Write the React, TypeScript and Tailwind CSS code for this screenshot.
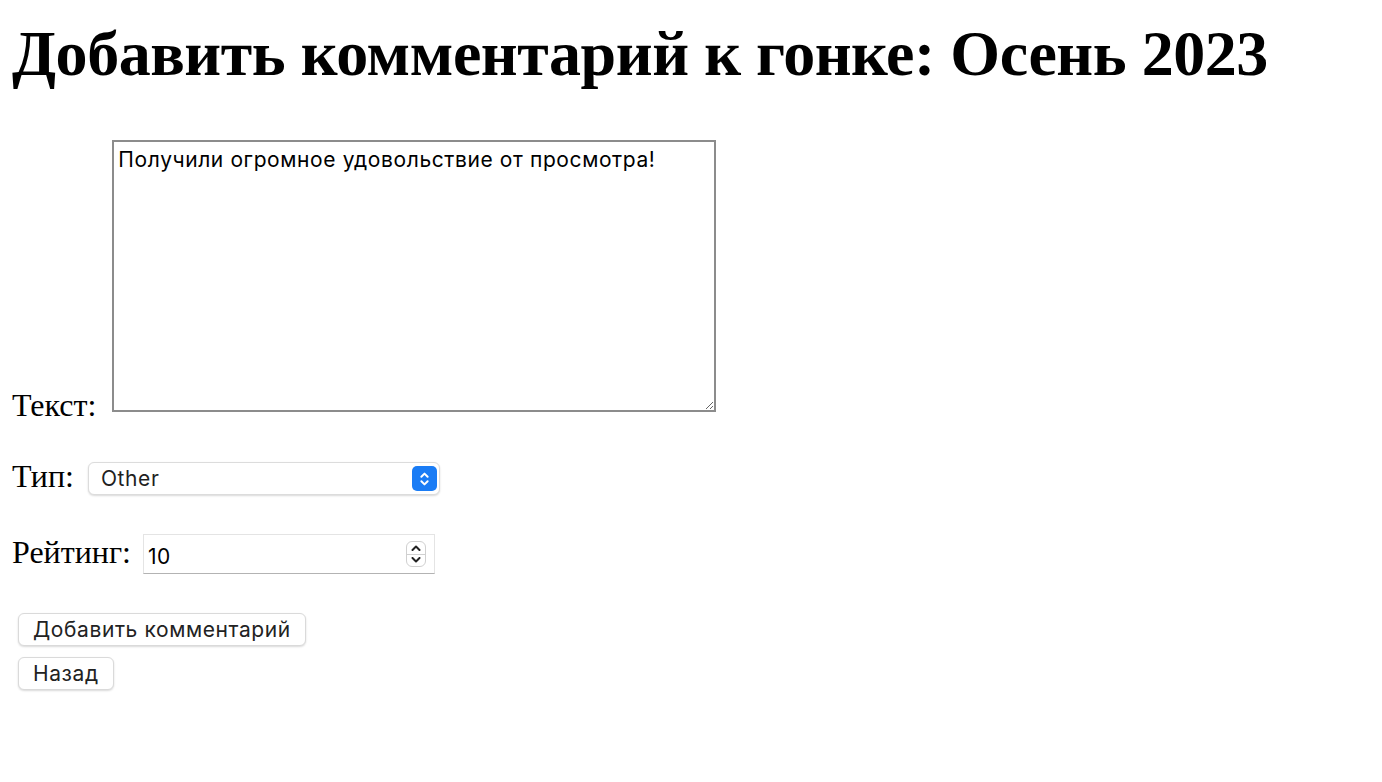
import { useState } from "react";

const serif = { fontFamily: '"Liberation Serif", "Times New Roman", serif' };

function Chevrons({ className }: { className?: string }) {
  return (
    <svg viewBox="0 0 12 20" className={className} fill="none" stroke="currentColor" strokeWidth="2.2" strokeLinecap="round" strokeLinejoin="round">
      <path d="M2.5 7.5 6 4l3.5 3.5" />
      <path d="M2.5 12.5 6 16l3.5-3.5" />
    </svg>
  );
}

export default function App() {
  const [text, setText] = useState("Получили огромное удовольствие от просмотра!");
  const [type, setType] = useState("Other");
  const [rating, setRating] = useState("10");

  return (
    <div className="min-h-screen bg-white px-[12px] text-black font-['Inter','Liberation_Sans',Arial,sans-serif]">
      <h1 className="pt-[18px] text-[64px] leading-[72px] font-bold tracking-[-0.45px]" style={serif}>
        Добавить комментарий к гонке: Осень 2023
      </h1>

      <form className="mt-[50px] flex flex-col" onSubmit={(e) => e.preventDefault()}>
        {/* Текст */}
        <div className="flex items-end">
          <label htmlFor="text" className="text-[32px] leading-[32px] mb-[-9px] mr-[16px]" style={serif}>
            Текст:
          </label>
          <textarea
            id="text"
            value={text}
            onChange={(e) => setText(e.target.value)}
            className="w-[604px] h-[272px] border-2 border-[#8c8c8c] px-[4px] pt-[6px] text-[21px] leading-[24px] tracking-[0.6px] resize outline-none"
          />
        </div>

        {/* Тип */}
        <div className="mt-[48px] flex items-end">
          <label htmlFor="type" className="text-[32px] leading-[32px] mr-[14px] mb-[3px]" style={serif}>
            Тип:
          </label>
          <div className="relative">
            <select
              id="type"
              value={type}
              onChange={(e) => setType(e.target.value)}
              className="block appearance-none w-[352px] h-[33px] rounded-[6px] border border-[#dcdcdc] bg-white pl-[12px] text-[21px] tracking-[0.6px] text-[#1f1f1f] shadow-[0_1px_2px_rgba(0,0,0,0.15)] outline-none"
            >
              <option>Other</option>
              <option>Positive</option>
              <option>Negative</option>
            </select>
            <div className="pointer-events-none absolute right-[3px] top-[4px] flex h-[25px] w-[25px] items-center justify-center rounded-[5px] bg-[#1a7cf5] text-white">
              <Chevrons className="h-[18px] w-[11px]" />
            </div>
          </div>
        </div>

        {/* Рейтинг */}
        <div className="mt-[39px] flex items-end">
          <label htmlFor="rating" className="text-[32px] leading-[32px] mr-[12px] mb-[6px]" style={serif}>
            Рейтинг:
          </label>
          <div className="relative">
            <input
              id="rating"
              type="text"
              inputMode="numeric"
              value={rating}
              onChange={(e) => setRating(e.target.value)}
              className="block w-[292px] h-[40px] border border-[#e4e4e4] border-b-[#b3b3b3] pl-[4px] pt-[4px] text-[21px] tracking-[0.4px] outline-none"
            />
            <div className="pointer-events-none absolute right-[9px] top-[7px] flex h-[26px] w-[20px] flex-col overflow-hidden rounded-[6px] border border-[#d0d0d0] bg-white text-[#222]">
              <div className="flex flex-1 items-center justify-center border-b border-[#d0d0d0]">
                <svg viewBox="0 0 10 6" className="h-[6px] w-[10px]" fill="none" stroke="currentColor" strokeWidth="2" strokeLinecap="round" strokeLinejoin="round">
                  <path d="M1.5 5 5 1.5 8.5 5" />
                </svg>
              </div>
              <div className="flex flex-1 items-center justify-center">
                <svg viewBox="0 0 10 6" className="h-[6px] w-[10px]" fill="none" stroke="currentColor" strokeWidth="2" strokeLinecap="round" strokeLinejoin="round">
                  <path d="M1.5 1 5 4.5 8.5 1" />
                </svg>
              </div>
            </div>
          </div>
        </div>

        {/* Кнопки */}
        <div className="mt-[39px] ml-[6px] flex flex-col items-start gap-[11px]">
          <button
            type="submit"
            className="h-[33px] rounded-[6px] border border-[#dadada] bg-white px-[14px] text-[21px] leading-none tracking-[0.6px] text-[#222] shadow-[0_1px_2px_rgba(0,0,0,0.15)]"
          >
            Добавить комментарий
          </button>
          <button
            type="button"
            className="h-[33px] rounded-[6px] border border-[#dadada] bg-white px-[14px] text-[21px] leading-none tracking-[0.6px] text-[#222] shadow-[0_1px_2px_rgba(0,0,0,0.15)]"
          >
            Назад
          </button>
        </div>
      </form>
    </div>
  );
}
